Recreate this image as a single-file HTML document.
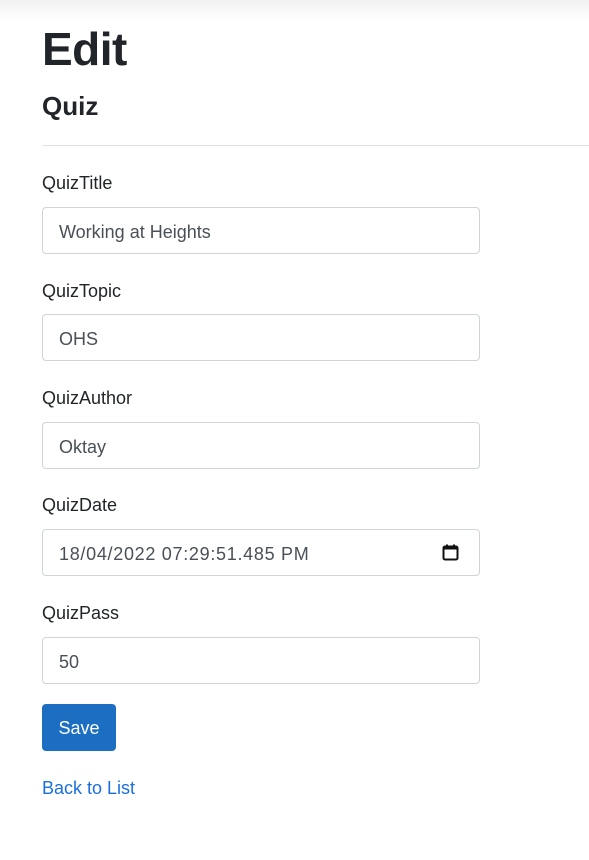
<!DOCTYPE html>
<html><head><style>
body{margin:0;width:589px;height:860px;background:#fff;font-family:"Liberation Sans",sans-serif;color:#212529;position:relative;overflow:hidden}
.top{position:absolute;left:0;top:0;width:589px;height:22px;background:linear-gradient(#f2f2f2,#fff)}
.a{position:absolute;left:42px;white-space:nowrap}
h1{margin:0;font-size:46px;font-weight:bold;top:22px;letter-spacing:-0.5px}
h4{margin:0;font-size:26px;font-weight:bold;top:91px}
.hr{position:absolute;left:42px;top:145px;width:547px;height:1px;background:#dee2e6}
.lbl{font-size:18px;line-height:22px}
.in{width:436px;height:45px;border:1px solid #ced4da;border-radius:4px;font-size:18px;color:#495057;line-height:48px;box-sizing:content-box;text-indent:16px}
.btn{background:#1b6ec2;color:#fff;border-radius:4px;width:74px;height:47px;line-height:49px;text-align:center;font-size:18px;top:704px}
.link{font-size:18px;top:778px;color:#1a6fde}
</style></head><body>
<div class="top"></div>
<h1 class="a">Edit</h1>
<h4 class="a">Quiz</h4>
<div class="hr"></div>
<div class="a lbl" style="top:172px">QuizTitle</div>
<div class="a in" style="top:207px">Working at Heights</div>
<div class="a lbl" style="top:280px">QuizTopic</div>
<div class="a in" style="top:314px">OHS</div>
<div class="a lbl" style="top:387px">QuizAuthor</div>
<div class="a in" style="top:422px">Oktay</div>
<div class="a lbl" style="top:494px">QuizDate</div>
<div class="a in" style="top:529px"><span style="letter-spacing:0.7px">18/04/2022 07:29:51.485 PM</span>
<svg style="position:absolute;right:20px;top:14px" width="17" height="17" viewBox="0 0 17 17"><rect x="1.5" y="2.5" width="14" height="13" rx="1.5" fill="none" stroke="#111" stroke-width="2"/><rect x="1.5" y="2.5" width="14" height="3" fill="#111"/><rect x="4" y="0.5" width="2" height="3" fill="#111"/><rect x="11" y="0.5" width="2" height="3" fill="#111"/></svg></div>
<div class="a lbl" style="top:602px">QuizPass</div>
<div class="a in" style="top:637px">50</div>
<div class="a btn">Save</div>
<div class="a link">Back to List</div>
</body></html>
